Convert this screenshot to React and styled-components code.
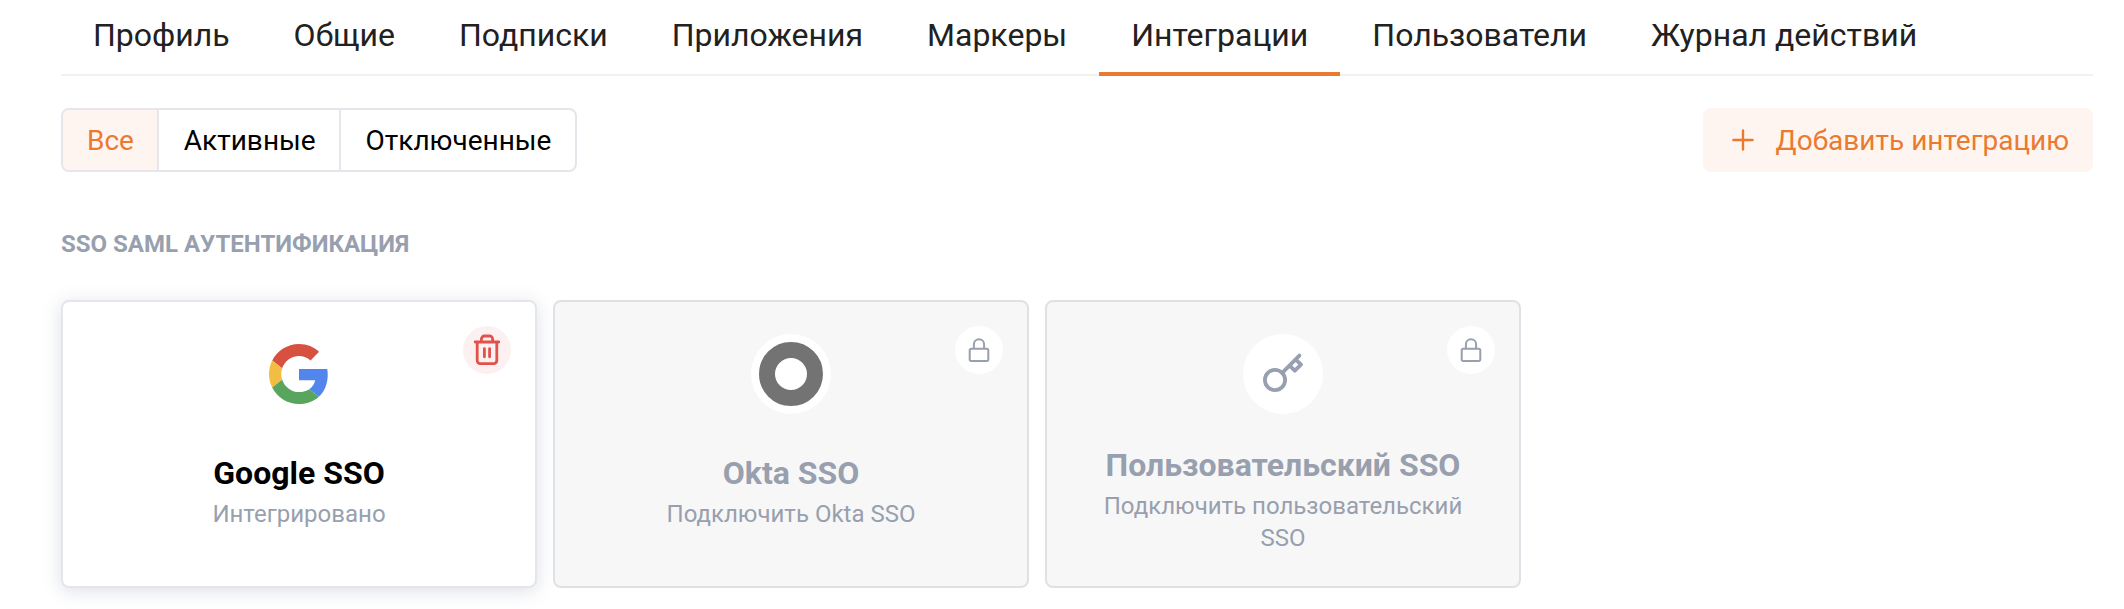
import React from 'react';
import styled, { createGlobalStyle } from 'styled-components';

const GlobalStyle = createGlobalStyle`
  * { box-sizing: border-box; }
  body { margin: 0; background: #fff; font-family: Roboto, 'Noto Sans', sans-serif; }
  button { font: inherit; border: 0; background: none; margin: 0; cursor: pointer; }
`;

const Page = styled.main`
  padding: 0 31px 21px 61px;
  height: 609px;
  overflow: hidden;
`;

const Tabs = styled.nav`
  display: flex;
  height: 76px;
  box-shadow: inset 0 -2px 0 #f2f2f2;
`;

const Tab = styled.button`
  padding: 16px 32px 0;
  height: 76px;
  font-size: 32px;
  line-height: 38px;
  display: flex;
  align-items: flex-start;
  white-space: nowrap;
  color: #212121;
  border-bottom: 4px solid ${(p) => (p.$active ? '#eb7a31' : 'transparent')};
`;

const Toolbar = styled.div`
  display: flex;
  justify-content: space-between;
  margin-top: 32px;
`;

const Segments = styled.div`
  display: flex;
  height: 64px;
  border: 2px solid #e5e6eb;
  border-radius: 8px;
  overflow: hidden;
`;

const Segment = styled.button`
  padding: 2px 23.3px 0 24px;
  font-size: 28px;
  line-height: 58px;
  color: ${(p) => (p.$active ? '#eb7a31' : '#000')};
  background: ${(p) => (p.$active ? '#fef5f0' : 'transparent')};
  & + & {
    padding-left: 24.6px;
    border-left: 2px solid #e5e6eb;
  }
`;

const AddButton = styled.button`
  display: flex;
  align-items: center;
  gap: 17px;
  height: 64px;
  padding: 0 24px;
  border-radius: 8px;
  font-size: 28px;
  color: #eb7a31;
  background: #fef5f0;
`;

const AddLabel = styled.span`
  padding-top: 2px;
  line-height: 62px;
`;

const SectionTitle = styled.h2`
  margin: 56px 0 0;
  font-size: 24px;
  line-height: 32px;
  font-weight: 700;
  color: #989fae;
`;

const Cards = styled.div`
  display: flex;
  gap: 16px;
  margin-top: 40px;
`;

const Card = styled.article`
  position: relative;
  display: flex;
  flex-direction: column;
  align-items: center;
  width: 476px;
  height: 288px;
  padding-top: 32px;
  border: 2px solid ${(p) => (p.$locked ? '#e0e1e6' : '#e5e6eb')};
  border-radius: 8px;
  background: ${(p) => (p.$locked ? '#f7f7f7' : '#fff')};
  box-shadow: ${(p) => (p.$locked ? 'none' : '0 3px 18px rgba(120, 130, 155, 0.25)')};
`;

const Logo = styled.div`
  display: flex;
  align-items: center;
  justify-content: center;
  width: 80px;
  height: 80px;
  border-radius: 50%;
  background: #fff;
`;

const Badge = styled.button`
  position: absolute;
  top: 24px;
  right: 24px;
  width: 48px;
  height: 48px;
  padding: 0;
  border-radius: 50%;
  background: ${(p) => (p.$danger ? '#fdf0f0' : '#fff')};
  svg { display: block; }
`;

const Body = styled.div`
  flex: 1;
  display: flex;
  align-items: center;
  padding-bottom: 2px;
`;

const Caption = styled.div`
  width: 376px;
  min-height: 93px;
  text-align: center;
`;

const CardTitle = styled.h3`
  margin: 0 0 5px;
  font-size: 32px;
  line-height: 40px;
  font-weight: 700;
  white-space: nowrap;
  color: ${(p) => (p.$locked ? '#989fae' : '#000')};
`;

const CardText = styled.p`
  margin: 0;
  font-size: 24px;
  line-height: 32px;
  color: #989fae;
`;

const PlusIcon = () => (
  <svg width="32" height="32" viewBox="0 0 32 32" stroke="currentColor" strokeWidth="2.4" strokeLinecap="round">
    <path d="M16 6.4v19.2M6.4 16h19.2" />
  </svg>
);

const TrashIcon = () => (
  <svg width="48" height="48" viewBox="0 0 48 48" fill="none" stroke="#e1524a" strokeWidth="2.8" strokeLinecap="round" strokeLinejoin="round">
    <path d="M12.2 16h23.6M14.2 16v18.6a3 3 0 0 0 3 3h13.6a3 3 0 0 0 3-3V16M18.4 16v-3a3 3 0 0 1 3-3h5.2a3 3 0 0 1 3 3v3M21.4 22.6v8.2M26.6 22.6v8.2" />
  </svg>
);

const LockIcon = () => (
  <svg width="48" height="48" viewBox="0 0 48 48" fill="none" stroke="#989fae" strokeWidth="2">
    <rect x="14.7" y="22.7" width="18.6" height="12.2" rx="1.6" />
    <path d="M18.9 22.7v-4.4a5.1 5.1 0 0 1 10.2 0v4.4" />
  </svg>
);

const GoogleLogo = () => (
  <svg width="60" height="60" viewBox="0 0 48 48">
    <path fill="#d75140" d="M24 9.5c3.54 0 6.71 1.22 9.21 3.6l6.85-6.85C35.9 2.38 30.47 0 24 0 14.62 0 6.51 5.38 2.56 13.22l7.98 6.19C12.43 13.72 17.74 9.5 24 9.5z" />
    <path fill="#5386ec" d="M46.98 24.55c0-1.57-.15-3.09-.38-4.55H24v9.02h12.94c-.58 2.96-2.26 5.48-4.78 7.18l7.73 6c4.51-4.18 7.09-10.36 7.09-17.65z" />
    <path fill="#f1bd42" d="M10.53 28.59c-.48-1.45-.76-2.99-.76-4.59s.27-3.14.76-4.59l-7.98-6.19C.92 16.46 0 20.12 0 24c0 3.88.92 7.54 2.56 10.78l7.97-6.19z" />
    <path fill="#58a55d" d="M24 48c6.48 0 11.93-2.13 15.89-5.81l-7.73-6c-2.15 1.45-4.92 2.3-8.16 2.3-6.26 0-11.57-4.22-13.47-9.91l-7.98 6.19C6.51 42.62 14.62 48 24 48z" />
  </svg>
);

const OktaLogo = () => (
  <svg width="64" height="64" viewBox="0 0 64 64" fill="none">
    <circle cx="32" cy="32" r="24" stroke="#737373" strokeWidth="16" />
  </svg>
);

const KeyLogo = () => (
  <svg width="80" height="80" viewBox="0 0 80 80" fill="none" stroke="#989fae" strokeWidth="3.8" strokeLinecap="round" strokeLinejoin="round">
    <circle cx="32" cy="46" r="10.1" />
    <path d="M39.2 38.8L56.4 21.6" />
    <path d="M47.4 32.4l4.4 4.3 6.2-6.1-4.4-4.3" />
  </svg>
);

const tabs = ['Профиль', 'Общие', 'Подписки', 'Приложения', 'Маркеры', 'Интеграции', 'Пользователи', 'Журнал действий'];
const filters = ['Все', 'Активные', 'Отключенные'];
const providers = [
  { title: 'Google SSO', text: 'Интегрировано', logo: <GoogleLogo /> },
  { title: 'Okta SSO', text: 'Подключить Okta SSO', logo: <OktaLogo />, locked: true },
  { title: 'Пользовательский SSO', text: 'Подключить пользовательский SSO', logo: <KeyLogo />, locked: true },
];

export default function App() {
  return (
    <>
      <GlobalStyle />
      <Page>
        <Tabs>
          {tabs.map((t) => (
            <Tab key={t} $active={t === 'Интеграции'}>{t}</Tab>
          ))}
        </Tabs>
        <Toolbar>
          <Segments>
            {filters.map((f, i) => (
              <Segment key={f} $active={i === 0}>{f}</Segment>
            ))}
          </Segments>
          <AddButton>
            <PlusIcon />
            <AddLabel>Добавить интеграцию</AddLabel>
          </AddButton>
        </Toolbar>
        <SectionTitle>SSO SAML АУТЕНТИФИКАЦИЯ</SectionTitle>
        <Cards>
          {providers.map((p) => (
            <Card key={p.title} $locked={p.locked}>
              <Logo>{p.logo}</Logo>
              <Badge $danger={!p.locked}>{p.locked ? <LockIcon /> : <TrashIcon />}</Badge>
              <Body>
                <Caption>
                  <CardTitle $locked={p.locked}>{p.title}</CardTitle>
                  <CardText>{p.text}</CardText>
                </Caption>
              </Body>
            </Card>
          ))}
        </Cards>
      </Page>
    </>
  );
}
